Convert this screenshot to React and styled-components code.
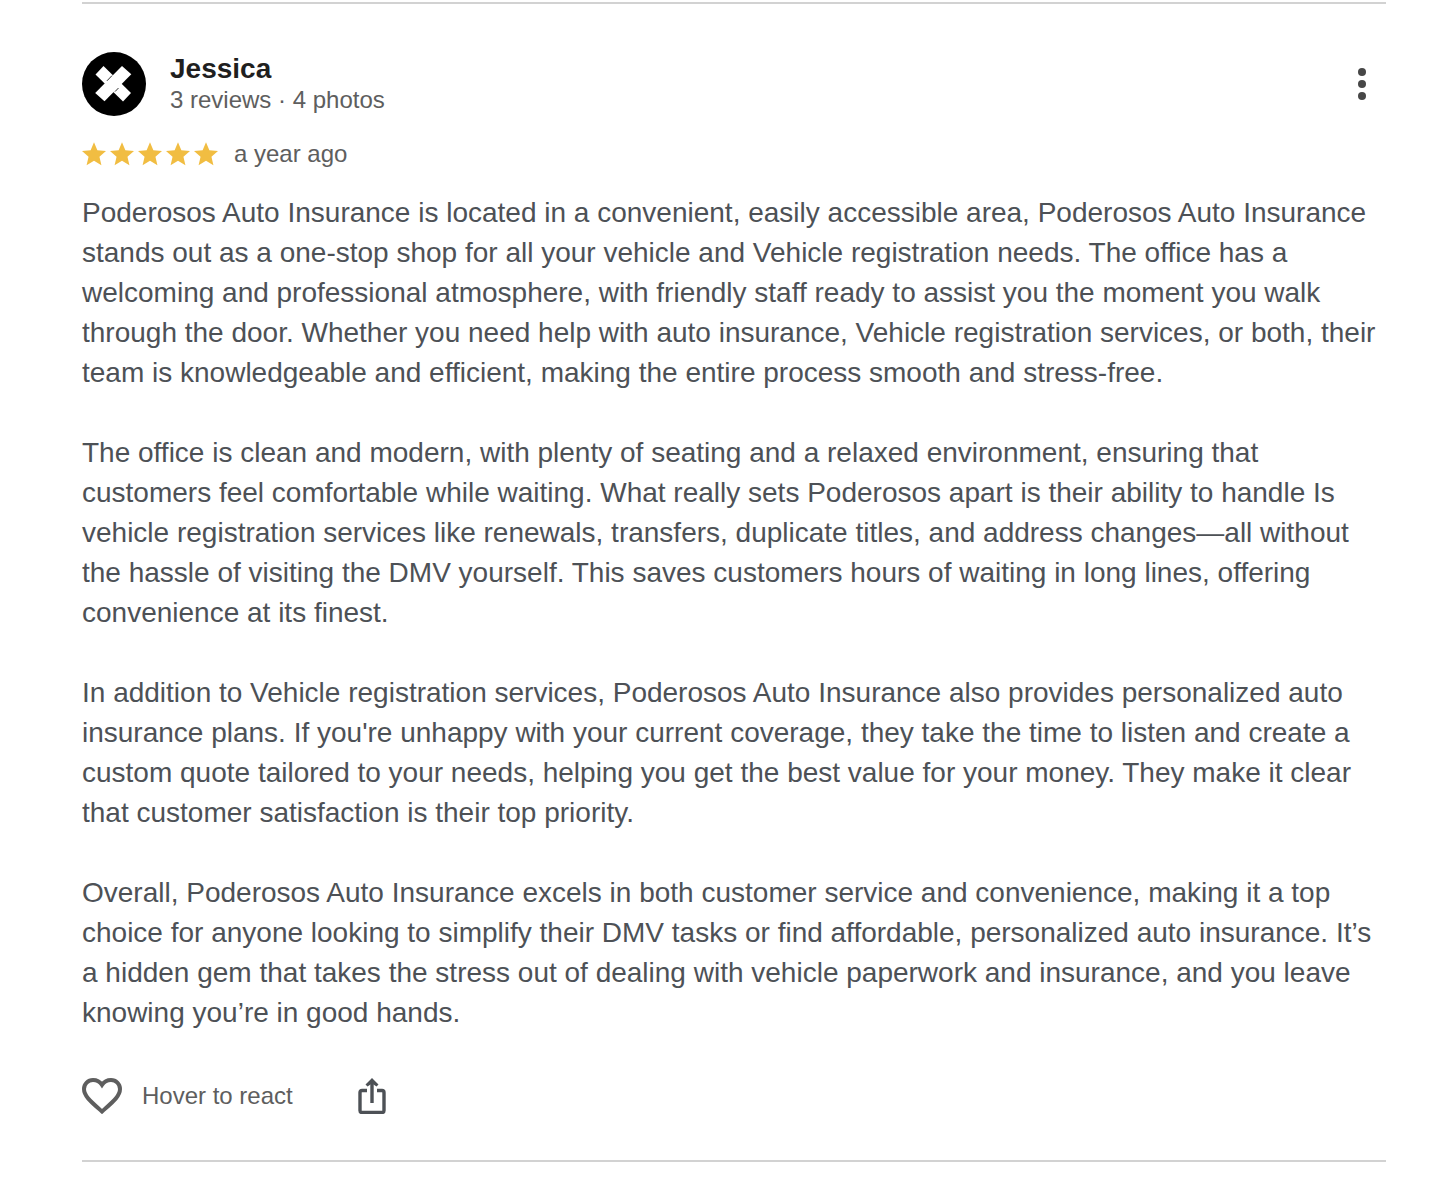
import styled, { createGlobalStyle } from "styled-components";

const GlobalStyle = createGlobalStyle`
  body {
    margin: 0;
    background: #fff;
    font-family: "Liberation Sans", Arial, Helvetica, sans-serif;
  }
`;

const Page = styled.main`
  padding: 2px 62px 0 82px;
`;

const Review = styled.article`
  border-top: 2px solid #d2d2d2;
  border-bottom: 2px solid #d2d2d2;
  padding: 48px 0 40px;
`;

const Header = styled.header`
  display: flex;
  align-items: center;
  gap: 24px;
  height: 64px;
`;

const Author = styled.div`
  flex: 1;
`;

const Name = styled.h2`
  margin: 0;
  font-size: 28px;
  line-height: 32px;
  color: #1f1f1f;
`;

const Meta = styled.span`
  display: block;
  font-size: 24px;
  line-height: 30px;
  color: #5e5e5e;
`;

const IconButton = styled.button`
  display: flex;
  align-items: center;
  justify-content: center;
  width: 48px;
  height: 48px;
  padding: 0;
  border: 0;
  background: none;
  cursor: pointer;
`;

const Rating = styled.div`
  display: flex;
  align-items: center;
  gap: 16px;
  margin-top: 23px;
`;

const Stars = styled.div`
  display: flex;
  gap: 4px;
`;

const Body = styled.div`
  display: grid;
  gap: 40px;
  margin: 24px 0 39px;
  font-size: 28px;
  line-height: 40px;
  color: #4d5156;
`;

const Paragraph = styled.p`
  margin: 0;
  white-space: pre-line;
`;

const Actions = styled.footer`
  display: flex;
  align-items: center;
  gap: 55px;
`;

const ReactButton = styled.button`
  display: flex;
  align-items: center;
  gap: 20px;
  height: 48px;
  padding: 0;
  border: 0;
  background: none;
  font: inherit;
  font-size: 24px;
  color: #5e5e5e;
  cursor: pointer;
`;

const paragraphs = [
  `Poderosos Auto Insurance is located in a convenient, easily accessible area, Poderosos Auto Insurance
stands out as a one-stop shop for all your vehicle and Vehicle registration needs. The office has a
welcoming and professional atmosphere, with friendly staff ready to assist you the moment you walk
through the door. Whether you need help with auto insurance, Vehicle registration services, or both, their
team is knowledgeable and efficient, making the entire process smooth and stress-free.`,
  `The office is clean and modern, with plenty of seating and a relaxed environment, ensuring that
customers feel comfortable while waiting. What really sets Poderosos apart is their ability to handle Is
vehicle registration services like renewals, transfers, duplicate titles, and address changes—all without
the hassle of visiting the DMV yourself. This saves customers hours of waiting in long lines, offering
convenience at its finest.`,
  `In addition to Vehicle registration services, Poderosos Auto Insurance also provides personalized auto
insurance plans. If you're unhappy with your current coverage, they take the time to listen and create a
custom quote tailored to your needs, helping you get the best value for your money. They make it clear
that customer satisfaction is their top priority.`,
  `Overall, Poderosos Auto Insurance excels in both customer service and convenience, making it a top
choice for anyone looking to simplify their DMV tasks or find affordable, personalized auto insurance. It’s
a hidden gem that takes the stress out of dealing with vehicle paperwork and insurance, and you leave
knowing you’re in good hands.`,
];

const Avatar = () => (
  <svg width="64" height="64" viewBox="0 0 64 64" role="img" aria-label="Jessica">
    <circle cx="32" cy="32" r="32" fill="#000" />
    <path d="M21.5 14L49 41L41 49.5L13.5 22.5Z" fill="#fff" />
    <path d="M40 14L49.3 22.3L22.5 49.3L13.2 41Z" fill="#fff" />
    <path d="M25 28.8L30 23.6M33 39.6L36.5 36" stroke="#000" strokeWidth="0.8" />
  </svg>
);

const Star = () => (
  <svg width="24" height="24" viewBox="2 1.7 20 20" fill="#f1bd42" aria-hidden="true">
    <path d="M12 17.27L18.18 21l-1.64-7.03L22 9.24l-7.19-.61L12 2 9.19 8.63 2 9.24l5.46 4.73L5.82 21z" />
  </svg>
);

const MoreIcon = () => (
  <svg width="48" height="48" viewBox="0 0 48 48" fill="#474747" aria-hidden="true">
    <circle cx="24" cy="12" r="4" />
    <circle cx="24" cy="24" r="4" />
    <circle cx="24" cy="36" r="4" />
  </svg>
);

const HeartIcon = () => (
  <svg width="40" height="36" viewBox="0 0 40 36" fill="none" stroke="#5e5e5e" aria-hidden="true">
    <path
      d="M20 33.5C10 24.5 2 18.5 2 11C2 6 6 2 11 2C14.5 2 18 3.8 20 6.8C22 3.8 25.5 2 29 2C34 2 38 6 38 11C38 18.5 30 24.5 20 33.5Z"
      strokeWidth="4"
    />
  </svg>
);

const ShareIcon = () => (
  <svg width="28" height="36" viewBox="0 0 28 36" fill="none" stroke="#4d5156" aria-hidden="true">
    <path
      d="M9 12.5H4Q2 12.5 2 14.5V32.5Q2 34.5 4 34.5H24Q26 34.5 26 32.5V14.5Q26 12.5 24 12.5H19"
      strokeWidth="3.4"
    />
    <path d="M14 25V4" strokeWidth="3.4" />
    <path d="M14 0L20.5 6.5L18.5 8.5L14 5.5L9.5 8.5L7.5 6.5Z" fill="#4d5156" stroke="none" />
  </svg>
);

const App = () => {
  return (
    <>
      <GlobalStyle />
      <Page>
        <Review>
          <Header>
            <Avatar />
            <Author>
              <Name>Jessica</Name>
              <Meta>3 reviews · 4 photos</Meta>
            </Author>
            <IconButton aria-label="More options">
              <MoreIcon />
            </IconButton>
          </Header>
          <Rating>
            <Stars role="img" aria-label="5 stars">
              {[1, 2, 3, 4, 5].map((n) => (
                <Star key={n} />
              ))}
            </Stars>
            <Meta>a year ago</Meta>
          </Rating>
          <Body>
            {paragraphs.map((text) => (
              <Paragraph key={text}>{text}</Paragraph>
            ))}
          </Body>
          <Actions>
            <ReactButton>
              <HeartIcon />
              Hover to react
            </ReactButton>
            <IconButton aria-label="Share">
              <ShareIcon />
            </IconButton>
          </Actions>
        </Review>
      </Page>
    </>
  );
};

export default App;
